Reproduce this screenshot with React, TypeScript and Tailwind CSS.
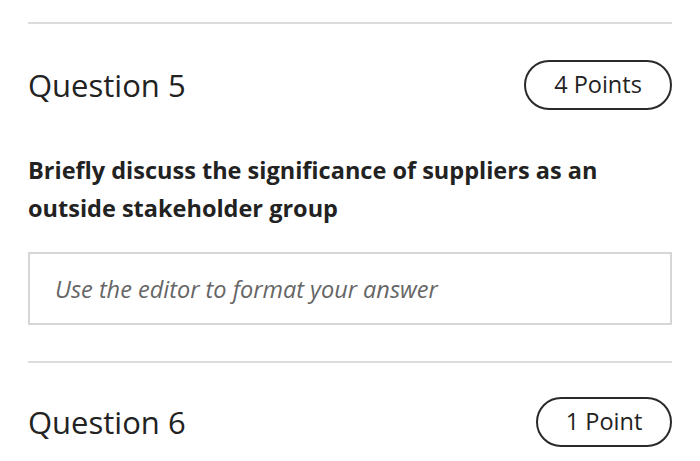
export default function App() {
  return (
    <div className="min-h-screen bg-white px-[28px] pt-[22px] text-[#222222] font-['Open_Sans',sans-serif]">
      <div className="h-[2px] bg-[#dcdcdc]" />
      <div className="mt-[36px] flex items-center justify-between">
        <h2 className="text-[31px] leading-none">Question 5</h2>
        <span className="flex h-[50px] w-[148px] items-center justify-center rounded-full border-2 border-[#2a2a2a] text-[23.5px]">
          4 Points
        </span>
      </div>
      <p className="mt-[41px] text-[23.5px] font-bold leading-[38px]">
        Briefly discuss the significance of suppliers as an
        <br />
        outside stakeholder group
      </p>
      <div className="mt-[25px] flex h-[73px] items-center border-2 border-[#d6d6d6] px-[25px] pt-[3px]">
        <span className="text-[23.5px] italic text-[#666666]">
          Use the editor to format your answer
        </span>
      </div>
      <div className="mt-[36px] h-[2px] bg-[#dcdcdc]" />
      <div className="mt-[34px] flex items-center justify-between">
        <h2 className="text-[31px] leading-none">Question 6</h2>
        <span className="flex h-[50px] w-[136px] items-center justify-center rounded-full border-2 border-[#2a2a2a] text-[23.5px]">
          1 Point
        </span>
      </div>
    </div>
  );
}
